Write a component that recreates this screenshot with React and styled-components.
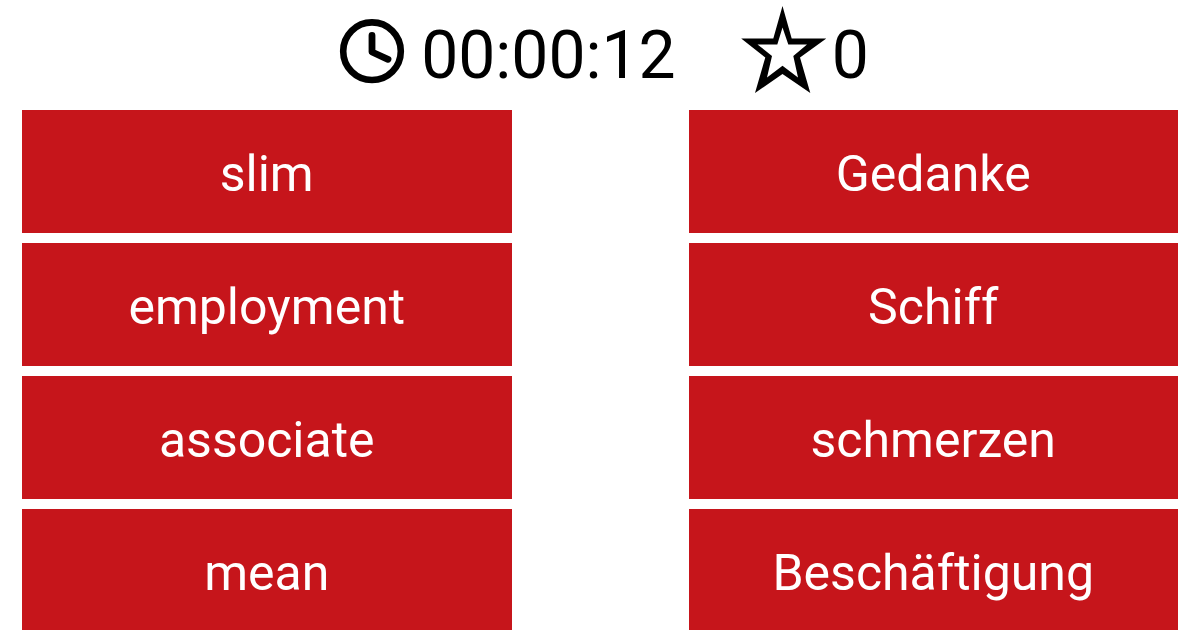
import React, { useState } from "react";
import styled, { createGlobalStyle } from "styled-components";

const pairs = [
    ["slim", "Gedanke"],
    ["employment", "Schiff"],
    ["associate", "schmerzen"],
    ["mean", "Beschäftigung"],
];

const timeFormat = (seconds) => {
    const parts = [Math.floor(seconds / 3600), Math.floor(seconds / 60) % 60, seconds % 60];
    return parts.map((part) => String(part).padStart(2, "0")).join(":");
};

function ClockIcon() {
    return (
        <svg width="80" height="100" viewBox="0 0 80 100" fill="none" stroke="#000" aria-hidden="true">
            <circle cx="41" cy="51.2" r="28.8" strokeWidth="6.6" />
            <path d="M41 35.5V52L57 59.3" strokeWidth="6.8" strokeLinecap="round" strokeLinejoin="round" />
        </svg>
    );
}

function StarIcon() {
    return (
        <svg width="88" height="100" viewBox="0 0 88 100" aria-hidden="true">
            <path
                fillRule="evenodd"
                d="M42.5 6L51.7 38.5H86.3L60 57.5L70.3 93L42.5 74L15 93L25.3 57.5L1.2 38.5H33.3Z
                    M42.5 27.5L37.3 44.4H17.5L32 56L27 77.5L42.5 65.8L58 77.5L53.3 56L67 44.4H48.3Z"
            />
        </svg>
    );
}

function App() {
    const [seconds] = useState(12);
    const [score] = useState(0);
    const [selected, setSelected] = useState(null);

    return (
        <>
            <GlobalStyle />
            <Header>
                <Timer>
                    <ClockIcon />
                    <Value>{timeFormat(seconds)}</Value>
                </Timer>
                <Score>
                    <StarIcon />
                    <Value>{score}</Value>
                </Score>
            </Header>
            <Board>
                {pairs.map((pair) =>
                    pair.map((word) => (
                        <WordButton
                            key={word}
                            type="button"
                            $selected={selected === word}
                            onClick={() => setSelected(word)}
                        >
                            {word}
                        </WordButton>
                    ))
                )}
            </Board>
        </>
    );
}

const GlobalStyle = createGlobalStyle`
    body {
        margin: 0;
        background-color: white;
        color: black;
        font-family: Roboto, "Liberation Sans", sans-serif;
        overflow: hidden auto;
        scrollbar-width: none;
    }
`;

const Header = styled.header`
    display: flex;
    justify-content: center;
    gap: 64px;
    padding-bottom: 10px;
`;

const Timer = styled.div`
    display: flex;
    gap: 10px;
`;

const Score = styled.div`
    display: flex;
    gap: 4px;
`;

const Value = styled.span`
    font-size: 66px;
    line-height: 112px;
    height: 100px;
`;

const Board = styled.main`
    display: grid;
    grid-template-columns: 1fr 1fr;
    grid-auto-rows: 123px;
    column-gap: 177px;
    row-gap: 10px;
    padding: 0 22px 22px;
`;

const WordButton = styled.button`
    border: none;
    padding: 4px 10px 0;
    background-color: ${({ $selected }) => ($selected ? "#8f0f14" : "#c6151b")};
    color: white;
    font-family: inherit;
    font-size: 50px;
    cursor: pointer;
`;

export default App;
